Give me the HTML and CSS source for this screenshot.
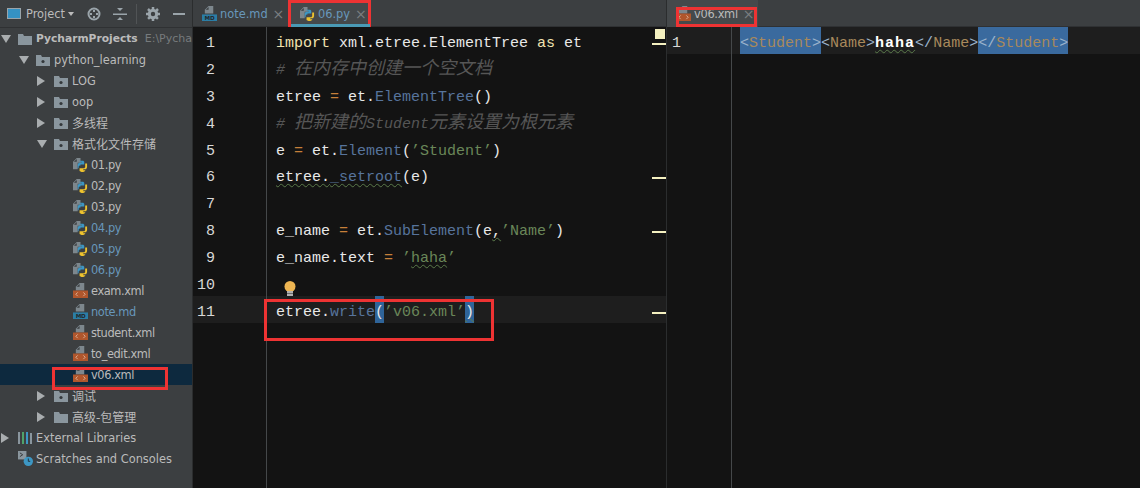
FILE: index.html
```html
<!DOCTYPE html>
<html lang="zh">
<head>
<meta charset="utf-8">
<title>PyCharm</title>
<link rel="stylesheet" href="styles.css">
</head>
<body>
<svg class="defs" width="0" height="0">
  <symbol id="folder" viewBox="0 0 14 12"><path fill="#8a969e" d="M0 1h5l1 2h8v9H0z"/><circle cx="7" cy="7.5" r="1.6" fill="#33383b"/></symbol>
  <symbol id="folder-plain" viewBox="0 0 14 12"><path fill="#8a969e" d="M0 1h5l1 2h8v9H0z"/></symbol>
  <symbol id="py" viewBox="0 0 16 16"><path fill="#7d878d" d="M0 5 4 1h4v4h1v1H5v7H0z"/><path fill="#3c3f41" d="M1 5h3V2z"/><path fill="#3d97c4" d="M7 4h4l1 1v3H8v1h-1l-1 1v2H5V8l1-2h3V5H7z"/><path fill="#eec32e" d="M15 7v4l-1 2h-3v1h2v1l-2 1H9l-2-1v-3h5l1-1V7z"/></symbol>
  <symbol id="xml" viewBox="0 0 16 16"><path fill="#7d878d" d="M3 4 7 0h5v8H3z"/><path fill="#3c3f41" d="M4 4h3V1z"/><rect y="8" width="16" height="8" fill="#b0562c"/><path fill="none" stroke="#e6c8b2" stroke-width=".8" d="M5 10 3 12l2 2M11 10l2 2-2 2"/></symbol>
  <symbol id="md" viewBox="0 0 16 16"><path fill="#7d878d" d="M3 4 7 0h5v8H3z"/><path fill="#3c3f41" d="M4 4h3V1z"/><rect y="9" width="16" height="7" fill="#2b7ea6"/></symbol>
</svg>
<div class="app">
  <aside class="side">
    <header class="side-head">
      <svg class="proj-icon" width="14" height="11" viewBox="0 0 14 11"><rect x=".5" y=".5" width="13" height="10" fill="#3592c4" stroke="#9aa4aa"/></svg>
      <span class="proj-title">Project</span><span class="caret"></span>
      <svg class="tool tool-target" width="14" height="14" viewBox="0 0 14 14"><circle cx="7" cy="7" r="5.5" fill="none" stroke="#9aa4aa" stroke-width="2"/><path stroke="#9aa4aa" stroke-width="2" d="M7 3v2M7 9v2M3 7h2M9 7h2"/></svg>
      <svg class="tool tool-fold" width="14" height="14" viewBox="0 0 14 14"><path fill="#9aa4aa" d="M0 6.500h14v1.500H0zM4 1h6L7 4zM4 13h6l-3-3z"/></svg>
      <span class="tool-sep"></span>
      <svg class="tool tool-gear" width="14" height="14" viewBox="0 0 14 14"><circle cx="7" cy="7" r="3.700" fill="none" stroke="#9aa4aa" stroke-width="3"/><path stroke="#9aa4aa" stroke-width="2.500" d="M7 0v14M0 7h14M2 2l10 10M12 2 2 12" stroke-dasharray="2.500 9 2.500"/></svg>
      <span class="tool-min"></span>
    </header>
    <ul class="tree">
      <li class="row d0"><span class="arrow down"></span><svg class="ic-f"><use href="#folder-plain"/></svg><b>PycharmProjects</b><span class="path">E:\Pycha</span></li>
      <li class="row d1"><span class="arrow down"></span><svg class="ic-f"><use href="#folder"/></svg>python_learning</li>
      <li class="row d2"><span class="arrow"></span><svg class="ic-f"><use href="#folder"/></svg>LOG</li>
      <li class="row d2"><span class="arrow"></span><svg class="ic-f"><use href="#folder"/></svg>oop</li>
      <li class="row d2 cjk"><span class="arrow"></span><svg class="ic-f"><use href="#folder"/></svg>多线程</li>
      <li class="row d2 cjk"><span class="arrow down"></span><svg class="ic-f"><use href="#folder"/></svg>格式化文件存储</li>
      <li class="row d3"><svg class="ic"><use href="#py"/></svg>01.py</li>
      <li class="row d3"><svg class="ic"><use href="#py"/></svg>02.py</li>
      <li class="row d3"><svg class="ic"><use href="#py"/></svg>03.py</li>
      <li class="row d3 mod"><svg class="ic"><use href="#py"/></svg>04.py</li>
      <li class="row d3 mod"><svg class="ic"><use href="#py"/></svg>05.py</li>
      <li class="row d3 mod"><svg class="ic"><use href="#py"/></svg>06.py</li>
      <li class="row d3"><svg class="ic"><use href="#xml"/></svg>exam.xml</li>
      <li class="row d3 mod"><svg class="ic" viewBox="0 0 16 16"><use href="#md"/><text class="md-label" x="8" y="15">MD</text></svg>note.md</li>
      <li class="row d3"><svg class="ic"><use href="#xml"/></svg>student.xml</li>
      <li class="row d3"><svg class="ic"><use href="#xml"/></svg>to_edit.xml</li>
      <li class="row d3 sel"><svg class="ic"><use href="#xml"/></svg>v06.xml<span class="red red-tree"></span></li>
      <li class="row d2 cjk"><span class="arrow"></span><svg class="ic-f"><use href="#folder"/></svg>调试</li>
      <li class="row d2 cjk"><span class="arrow"></span><svg class="ic-f"><use href="#folder-plain"/></svg>高级-包管理</li>
      <li class="row d0"><span class="arrow"></span><svg class="ic-f" viewBox="0 0 14 12"><path fill="#8a969e" d="M0 0h2v12H0z"/><path fill="#4fa36b" d="M4 0h2v12H4z"/><path fill="#3d97c4" d="M8 0h2v12H8z"/><path fill="#8a969e" d="M12 1h2v11h-2z"/></svg>External Libraries</li>
      <li class="row d0 scratch"><svg class="ic" viewBox="0 0 16 16"><path fill="#8a969e" d="M0 0h9v9H0z"/><path fill="none" stroke="#33383b" d="m2 2 3 2-3 2"/><circle cx="11" cy="11" r="5" fill="#3d97c4"/><path fill="none" stroke="#20303a" d="M11 8v3h2"/></svg>Scratches and Consoles</li>
    </ul>
  </aside>

  <section class="pane pane-left">
    <nav class="tabs">
      <div class="tab tab-note"><svg class="ic" viewBox="0 0 16 16"><use href="#md"/><text class="md-label" x="8" y="15">MD</text></svg><span class="mod">note.md</span><span class="x">×</span></div>
      <div class="tab tab-py active"><svg class="ic"><use href="#py"/></svg><span class="mod">06.py</span><span class="x">×</span><span class="red red-tab"></span></div>
    </nav>
    <div class="editor">
      <div class="gutter gutter-left">
        <div class="num">1</div><div class="num">2</div><div class="num">3</div><div class="num">4</div><div class="num">5</div><div class="num">6</div><div class="num">7</div><div class="num">8</div><div class="num">9</div><div class="num">10</div><div class="num cur">11</div>
      </div>
      <div class="code">
        <div class="line"><span class="kw">import</span> xml.etree.ElementTree <span class="kw">as</span> et</div>
        <div class="line cm"># <span class="han">在内存中创建一个空文档</span></div>
        <div class="line">etree <span class="op">=</span> et.<span class="fn">ElementTree</span>()</div>
        <div class="line cm"># <span class="han">把新建的</span>Student<span class="han">元素设置为根元素</span></div>
        <div class="line">e <span class="op">=</span> et.<span class="fn">Element</span>(<span class="str">’Student’</span>)</div>
        <div class="line"><span class="wavy">etree.<span class="fn">_setroot</span></span>(e)</div>
        <div class="line"></div>
        <div class="line">e_name <span class="op">=</span> et.<span class="fn">SubElement</span>(e<span class="wavy">,</span><span class="str">’Name’</span>)</div>
        <div class="line">e_name.text <span class="op">=</span> <span class="str">’<span class="wavy">haha</span>’</span></div>
        <div class="line"><svg class="bulb" width="12" height="16" viewBox="0 0 12 16"><circle cx="6" cy="5.500" r="5.500" fill="#eeb552"/><path fill="#b0b0b0" d="M3 10h6v5H3z"/><path fill="#6a6a6a" d="M3 12h6v1H3z"/></svg></div>
        <div class="line cur"><span>etree.</span><span class="fn">write</span><span class="hl">(</span><span class="str">’v06.xml’</span><span class="hl wavy">)</span></div>
        <span class="red red-code"></span>
      </div>
      <i class="mark mark-sq"></i><i class="mark m1"></i><i class="mark m6"></i><i class="mark m8"></i><i class="mark m11"></i>
    </div>
  </section>

  <section class="pane pane-right">
    <nav class="tabs">
      <div class="tab tab-xml active"><svg class="ic"><use href="#xml"/></svg><span class="xml-name">v06.xml</span><span class="x">×</span><span class="red red-xml"></span></div>
    </nav>
    <div class="editor">
      <div class="gutter gutter-right"><div class="num cur">1</div></div>
      <div class="code code-right">
        <div class="line cur"><span class="sel-t"><span class="br">&lt;</span><span class="tag">Student</span><span class="br">&gt;</span></span><span class="br">&lt;</span><span class="tag">Name</span><span class="br">&gt;</span><b class="strong">haha</b><span class="br">&lt;/</span><span class="tag">Name</span><span class="br">&gt;</span><span class="sel-t"><span class="br">&lt;/</span><span class="tag">Student</span><span class="br">&gt;</span></span></div>
      </div>
    </div>
  </section>
</div>
</body>
</html>
```

FILE: styles.css
```css
* { box-sizing: border-box; }
html, body { margin: 0; height: 100%; overflow: hidden; background: #131313; }
.defs { position: absolute; }
.md-label { font-family: "DejaVu Sans", sans-serif; font-size: 6px; font-weight: 700; fill: #23292d; text-anchor: middle; }
.app { display: flex; width: 1140px; height: 488px; font-family: "DejaVu Sans", "Noto Sans CJK SC", sans-serif; font-size: 11.400px; color: #bbbbbb; }

.side { width: 193px; flex: none; background: #3c3f41; border-right: 1px solid #2b2d2e; }
.side-head { height: 28px; display: flex; align-items: center; padding-left: 7px; border-bottom: 1px solid #2f3133; }
.proj-icon { flex: none; }
.proj-title { margin-left: 5px; width: 42px; }
.caret { width: 0; height: 0; border: 3px solid transparent; border-top: 4px solid #bbbbbb; border-bottom: 0; margin-left: 0; }
.tool { flex: none; }
.tool-target { margin-left: 13px; }
.tool-fold { margin-left: 12px; }
.tool-sep { width: 1px; height: 20px; background: #515456; margin-left: 9px; }
.tool-gear { margin-left: 9px; }
.tool-min { width: 12px; height: 2px; background: #9aa4aa; margin-left: 13px; }

.tree { list-style: none; margin: 0; padding: 0; }
.row { position: relative; height: 21px; display: flex; align-items: center; white-space: nowrap; }
.row b { color: #bbbbbb; font-size: 10.700px; }
.cjk { font-size: 12px; }
.path { margin-left: 7px; color: #777b7d; font-size: 11px; white-space: nowrap; }
.d0 { padding-left: 1px; }
.d1 { padding-left: 19px; }
.d2 { padding-left: 37px; }
.d3 { padding-left: 73px; letter-spacing: -0.4px; }
.scratch { padding-left: 18px; letter-spacing: 0; }
.arrow { flex: none; height: 0; width: 0; border-left: 8px solid #a9adaf; border-top: 5px solid transparent; border-bottom: 5px solid transparent; border-right: 0; margin-right: 9px; }
.arrow.down { border-left: 5px solid transparent; border-right: 5px solid transparent; border-top: 8px solid #a9adaf; border-bottom: 0; margin-right: 7px; }
.ic-f { flex: none; width: 14px; height: 12px; margin-right: 4px; }
.ic { flex: none; width: 15px; height: 15px; margin-right: 3px; }
.mod { color: #6897bb; }
.sel { background: #0d293e; color: #bbbbbb; }

.red { position: absolute; border: 3px solid #ee3333; pointer-events: none; }
.red-tree { left: 52px; top: 3px; width: 116px; height: 23px; }
.red-tab { left: -3px; top: 0; width: 83px; height: 32px; }
.red-xml { left: 9px; top: 7px; width: 81px; height: 20px; }
.red-code { left: -3px; top: 272px; width: 230px; height: 42px; }

.pane { display: flex; flex-direction: column; }
.pane-left { width: 474px; flex: none; border-right: 1px solid #2b2d2e; }
.pane-right { flex: 1; }
.tabs { height: 27px; display: flex; background: #3c3f41; border-bottom: 1px solid #2f3133; }
.tab { position: relative; display: flex; align-items: center; height: 27px; font-size: 12px; }
.tab .mod, .tab span { font-size: 11.400px; }
.xml-name { letter-spacing: -0.3px; }
.tab-note { width: 98px; padding-left: 9px; }
.tab-py { width: 79px; padding-left: 9px; }
.tab-xml { width: 91px; padding-left: 9px; background: #45494b; }
.tab .ic { margin-right: 3px; }
.tab-py.active { background: #45494b; }
.tab-py.active::after { content: ""; position: absolute; left: 0; right: 0; bottom: 0; height: 3px; background: #4a9ab5; }
.tab .x { color: #7a7e80; font-size: 14px; margin-left: 5px; }

.editor { flex: 1; display: flex; position: relative; font-family: "Liberation Mono", "Noto Sans CJK SC", monospace; font-size: 15px; line-height: 33px; background: #131313; color: #e8e8e8; }
.gutter { flex: none; text-align: right; color: #d8d8d8; border-right: 1px solid #45484a; }
.gutter-left { width: 74px; padding-right: 51px; }
.gutter-right { width: 65px; padding-right: 50px; }
.num { height: 26.900px; }
.num.cur, .line.cur { background: #1e1e1e; }
.gutter-left .num.cur { margin-right: -51px; padding-right: 51px; }
.gutter-right .num.cur { margin-right: -50px; padding-right: 50px; }
.code { flex: 1; position: relative; }
.line { display: flow-root; height: 26.900px; padding-left: 9px; white-space: pre; }
.line.cm { color: #565656; font-style: italic; }
.han { font-size: 18px; line-height: 26px; }
.kw { color: #f0e2b0; }
.op { color: #c77f3a; }
.fn { color: #57749c; }
.str { color: #6a8759; }
.wavy { text-decoration: underline wavy #5a7a4a 1px; text-underline-offset: 2px; }
.hl { display: inline-block; background: #2f6499; height: 27px; vertical-align: top; }
.bulb { display: block; margin: 12px 0 0 8px; position: relative; z-index: 1; }
.mark { position: absolute; left: 459px; width: 14px; height: 2px; background: #f4f0c0; }
.mark-sq { left: 462px; top: 2px; width: 10px; height: 10px; }
.m1 { top: 16px; }
.m6 { top: 150px; }
.m8 { top: 204px; }
.m11 { top: 285px; }
.code-right .line { padding-left: 8px; }
.sel-t { background: #3a6a9e; display: inline-block; height: 27px; vertical-align: top; }
.br { color: #9cb4cc; }
.tag { color: #a8895c; }
.strong { color: #ffffff; font-weight: 700; letter-spacing: 1px; text-decoration: underline wavy #5a7a4a 1px; text-underline-offset: 2px; }
```
